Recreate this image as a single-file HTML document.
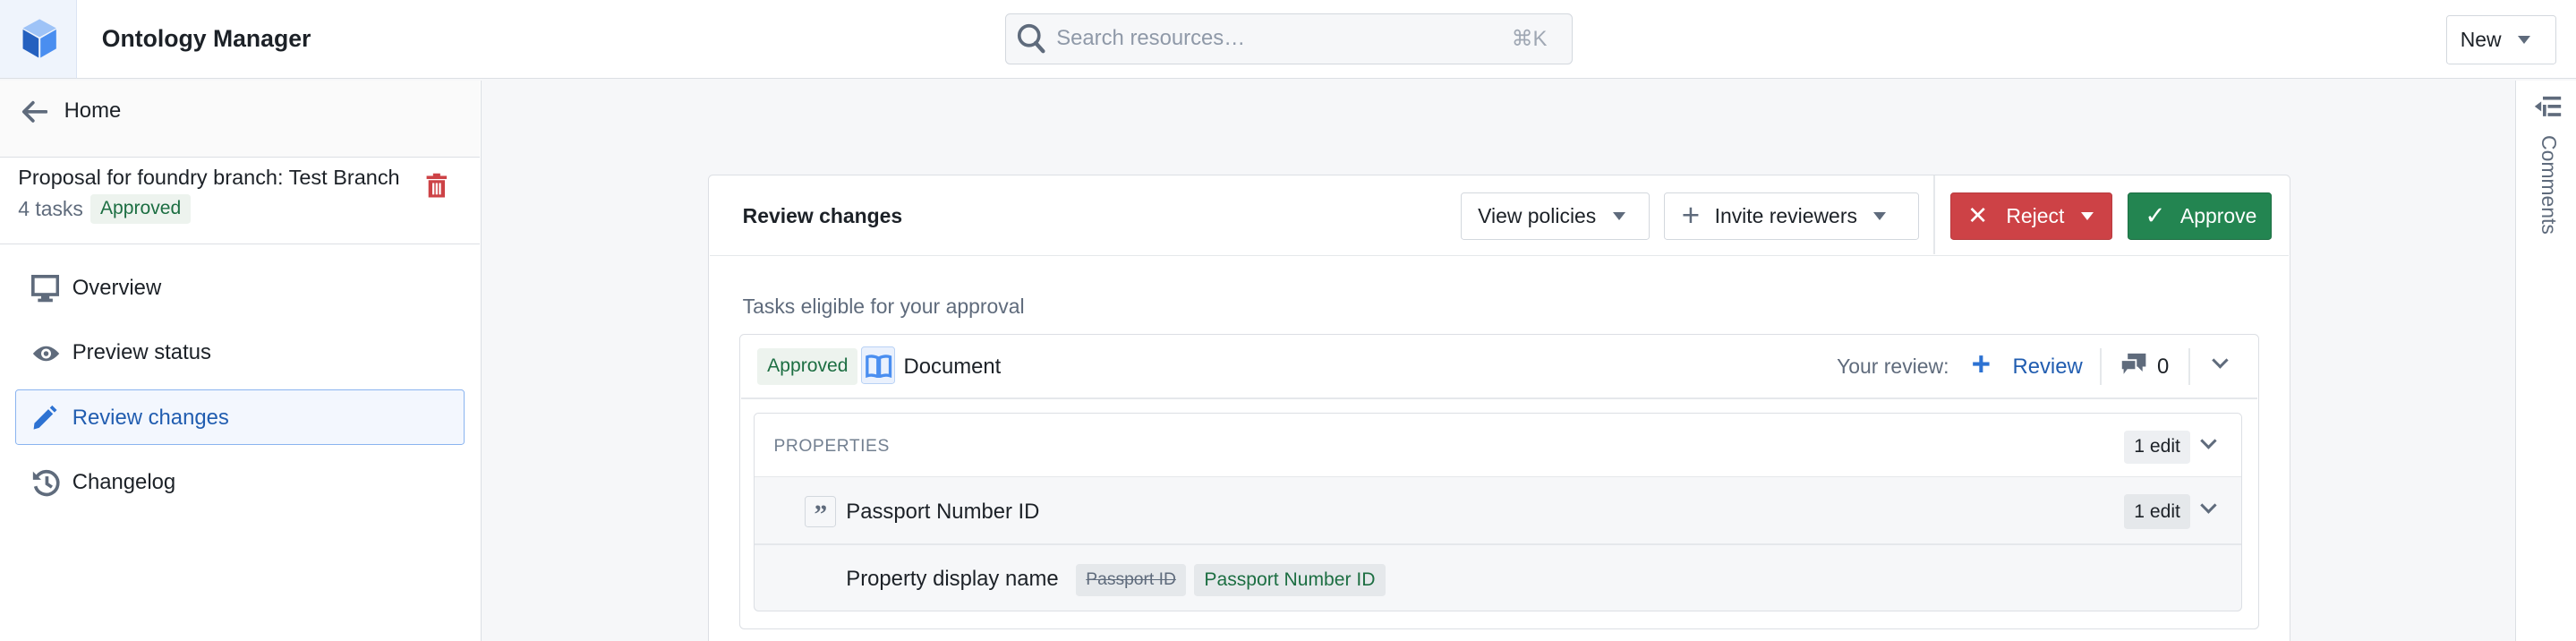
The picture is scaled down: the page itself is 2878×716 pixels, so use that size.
<!DOCTYPE html>
<html><head><meta charset="utf-8"><style>
*{box-sizing:border-box;margin:0;padding:0}
html,body{width:2878px;height:716px;overflow:hidden;background:#f5f6f8}
#r{zoom:1.8355;width:1568px;height:390px;position:relative;font-family:"Liberation Sans",sans-serif;color:#1c2127;font-size:12.5px;overflow:hidden;background:#f6f7f9}
.a{position:absolute}
.t{white-space:nowrap}
.btn{position:absolute;background:#fff;border:1px solid #d3d8de;border-radius:2px;display:flex;align-items:center;font-size:12.5px;padding:0 10px}
.caret{display:inline-block;width:0;height:0;border-left:4px solid transparent;border-right:4px solid transparent;border-top:5px solid #5f6b7c;margin-left:10px}
.tag{position:absolute;border-radius:2px;font-size:11.5px;display:flex;align-items:center;padding:0 6px}
.chev{position:absolute;width:7px;height:7px;border-right:1.8px solid #5f6b7c;border-bottom:1.8px solid #5f6b7c;transform:rotate(45deg)}
.n{font-size:13px}
</style></head><body><div id="r">
<div class="a" style="left:0;top:0;width:1568px;height:48px;background:#fff;border-bottom:1px solid #dcdfe4"></div>
<div class="a" style="left:0;top:0;width:47px;height:48px;background:#eff4fc;border-right:1px solid #dbe4f3;border-bottom:1px solid #dcdfe4"></div>
<svg class="a" style="left:13px;top:11px" width="22" height="25" viewBox="0 0 28 32"><path d="M14 1 L27 8 L14 15 L1 8Z" fill="#9ec3f7"/><path d="M1 9 L13.3 16 L13.3 31 L1 24Z" fill="#2560bf"/><path d="M14.7 16 L27 9 L27 24 L14.7 31Z" fill="#4a8ef0"/></svg>
<div class="a t" style="left:62px;top:15px;font-size:14.5px;font-weight:bold">Ontology Manager</div>
<div class="a" style="left:612px;top:8px;width:345px;height:31px;background:#f6f7f9;border:1px solid #d3d8de;border-radius:3px"></div>
<svg class="a" style="left:619px;top:14px" width="18" height="19" viewBox="0 0 18 19"><circle cx="7.5" cy="7.5" r="6" fill="none" stroke="#5f6b7c" stroke-width="2"/><path d="M11.5 12 L16 17" stroke="#5f6b7c" stroke-width="2.4" stroke-linecap="round"/></svg>
<div class="a t" style="left:643px;top:16px;color:#8f99a8;font-size:13px">Search resources…</div>
<div class="a t" style="left:920px;top:16px;color:#a0a8b4;font-size:13px">⌘K</div>
<div class="btn" style="left:1489px;top:9px;width:67px;height:30px;padding:0 8px">New<span class="caret"></span></div>
<!-- sidebar -->
<div class="a" style="left:0;top:49px;width:293px;height:341px;background:#fff;border-right:1px solid #dcdfe4"></div>
<div class="a" style="left:0;top:49px;width:292px;height:47px;background:#fafafa;border-bottom:1px solid #dcdfe4"></div>
<svg class="a" style="left:13px;top:61px" width="16" height="14" viewBox="0 0 16 14"><path d="M15 7H2 M7 1.5 L1.5 7 L7 12.5" fill="none" stroke="#5f6b7c" stroke-width="2" stroke-linecap="round" stroke-linejoin="round"/></svg>
<div class="a t n" style="left:39px;top:60px">Home</div>
<div class="a t" style="left:11px;top:101px;font-size:12.8px">Proposal for foundry branch: Test Branch</div>
<div class="a t" style="left:11px;top:120px;font-size:12.5px;color:#5f6b7c">4 tasks</div>
<div class="tag" style="left:55px;top:118px;height:18px;background:#edf3ee;color:#1c6e42">Approved</div>
<svg class="a" style="left:259px;top:105px" width="14" height="16" viewBox="0 0 16 18"><rect x="1" y="2" width="14" height="2.2" fill="#cd4246"/><rect x="5.5" y="0.3" width="5" height="2" fill="#cd4246"/><path d="M2.3 5 H13.7 V17 H2.3Z" fill="#cd4246"/><rect x="5" y="7" width="1.4" height="8" fill="#fff"/><rect x="7.3" y="7" width="1.4" height="8" fill="#fff"/><rect x="9.6" y="7" width="1.4" height="8" fill="#fff"/></svg>
<div class="a" style="left:0;top:148px;width:292px;height:1px;background:#dcdfe4"></div>
<svg class="a" style="left:19px;top:167px" width="17" height="17" viewBox="0 0 17 17"><rect x="1" y="1" width="15" height="11" fill="none" stroke="#5f6b7c" stroke-width="2"/><rect x="6" y="12" width="5" height="3" fill="#5f6b7c"/><rect x="4" y="14.5" width="9" height="2" fill="#5f6b7c"/></svg>
<div class="a t n" style="left:44px;top:168px">Overview</div>
<svg class="a" style="left:19px;top:209px" width="18" height="12" viewBox="0 0 18 12"><path d="M1 6 Q9 -3 17 6 Q9 15 1 6Z" fill="#5f6b7c"/><circle cx="9" cy="6" r="3" fill="#fff"/><circle cx="9" cy="6" r="1.5" fill="#5f6b7c"/></svg>
<div class="a t n" style="left:44px;top:207px">Preview status</div>
<div class="a" style="left:9px;top:237px;width:274px;height:34px;background:#f3f7fe;border:1px solid #8ab4f0;border-radius:2px"></div>
<svg class="a" style="left:19px;top:246px" width="16" height="16" viewBox="0 0 17 17"><path d="M2 12 L11 3 L14 6 L5 15 L1.5 16 Z" fill="#2d72d2"/><path d="M12 2 L13.5 0.5 L16.5 3.5 L15 5Z" fill="#2d72d2"/></svg>
<div class="a t n" style="left:44px;top:247px;color:#215db0">Review changes</div>
<svg class="a" style="left:19px;top:285px" width="18" height="18" viewBox="0 0 18 18"><path d="M3.5 5 A7 7 0 1 1 2.5 11" fill="none" stroke="#5f6b7c" stroke-width="2"/><path d="M1 2 V7 H6Z" fill="#5f6b7c"/><path d="M9.5 5 V9.5 L12.5 11.5" fill="none" stroke="#5f6b7c" stroke-width="2"/></svg>
<div class="a t n" style="left:44px;top:286px">Changelog</div>
<!-- right panel -->
<div class="a" style="left:1531px;top:49px;width:37px;height:341px;background:#fff;border-left:1px solid #dcdfe4"></div>
<svg class="a" style="left:1542px;top:58px" width="18" height="14" viewBox="0 0 18 14"><rect x="6" y="1" width="11" height="2" fill="#5f6b7c"/><rect x="9" y="6" width="8" height="2" fill="#5f6b7c"/><rect x="9" y="11" width="8" height="2" fill="#5f6b7c"/><path d="M1 7 L5 4 V10Z" fill="#5f6b7c"/><rect x="6" y="6" width="2" height="7" fill="#5f6b7c"/></svg>
<div class="a t" style="left:1544px;top:82px;writing-mode:vertical-rl;font-size:12.5px;color:#5f6b7c">Comments</div>
<!-- card -->
<div class="a" style="left:431px;top:106px;width:963px;height:300px;background:#fff;border:1px solid #dcdfe4;border-radius:3px"></div>
<div class="a" style="left:432px;top:155px;width:961px;height:1px;background:#e5e8eb"></div>
<div class="a t" style="left:452px;top:124px;font-size:12.5px;font-weight:bold">Review changes</div>
<div class="btn" style="left:889px;top:117px;width:115px;height:29px">View policies<span class="caret"></span></div>
<div class="btn" style="left:1013px;top:117px;width:155px;height:29px"><span style="color:#5f6b7c;font-size:19px;margin-right:9px;line-height:1">+</span>Invite reviewers<span class="caret"></span></div>
<div class="a" style="left:1177px;top:107px;width:1px;height:48px;background:#e5e8eb"></div>
<div class="btn" style="left:1187px;top:117px;width:99px;height:29px;background:#cd4246;border-color:#b83b3f;color:#fff"><span style="font-size:15px;margin-right:11px">✕</span>Reject<span class="caret" style="border-top-color:#fff"></span></div>
<div class="btn" style="left:1295px;top:117px;width:88px;height:29px;background:#238551;border-color:#1c6e42;color:#fff"><span style="font-size:15px;margin-right:9px">✓</span>Approve</div>
<div class="a t" style="left:452px;top:179px;color:#5f6b7c;font-size:12.5px">Tasks eligible for your approval</div>
<!-- task box -->
<div class="a" style="left:450px;top:203px;width:925px;height:180px;border:1px solid #dcdfe4;border-radius:3px;background:#fff"></div>
<div class="a" style="left:451px;top:242px;width:923px;height:1px;background:#e5e8eb"></div>
<div class="tag" style="left:461px;top:212px;height:22px;background:#edf3ee;color:#1c6e42">Approved</div>
<div class="a" style="left:524px;top:211px;width:21px;height:23px;background:#eaf1fd;border:1px solid #b9d2f5;border-radius:2px"></div>
<svg class="a" style="left:527px;top:215px" width="16" height="15" viewBox="0 0 16 15"><path d="M1 2 Q4 1 7.5 2.5 V14 Q4 12.5 1 13.5Z M15 2 Q12 1 8.5 2.5 V14 Q12 12.5 15 13.5Z" fill="none" stroke="#4a8ef0" stroke-width="1.8"/></svg>
<div class="a t n" style="left:550px;top:216px">Document</div>
<div class="a t" style="left:1118px;top:216px;font-size:12.5px;color:#5f6b7c">Your review:</div>
<div class="a t" style="left:1200px;top:212px;font-size:20px;color:#2d72d2;line-height:1;font-weight:bold">+</div>
<div class="a t n" style="left:1225px;top:216px;color:#215db0">Review</div>
<div class="a" style="left:1278px;top:212px;width:1px;height:22px;background:#e5e8eb"></div>
<svg class="a" style="left:1290px;top:214px" width="17" height="16" viewBox="0 0 17 16"><path d="M5 1 H16 V9 H14 V12 L11 9 H5Z" fill="#5f6b7c"/><path d="M1 5 H10 V11 H5 L2 15 V11 H1Z" fill="#5f6b7c" stroke="#fff" stroke-width="1"/></svg>
<div class="a t n" style="left:1313px;top:216px">0</div>
<div class="a" style="left:1332px;top:212px;width:1px;height:22px;background:#e5e8eb"></div>
<div class="chev" style="left:1348px;top:216px"></div>
<!-- inner -->
<div class="a" style="left:459px;top:251px;width:906px;height:121px;border:1px solid #dcdfe4;border-radius:3px;background:#f6f7f9;overflow:hidden">
<div class="a" style="left:0;top:0;width:906px;height:39px;background:#fff;border-bottom:1px solid #e5e8eb"></div>
<div class="a" style="left:0;top:79px;width:906px;height:1px;background:#e5e8eb"></div>
</div>
<div class="a t" style="left:471px;top:266px;font-size:10.5px;color:#738091;letter-spacing:0.3px">PROPERTIES</div>
<div class="tag" style="left:1293px;top:262px;height:20px;background:#edeff2">1 edit</div>
<div class="chev" style="left:1341px;top:265px"></div>
<div class="a" style="left:490px;top:302px;width:19px;height:19px;border:1px solid #d3d8de;border-radius:2px;background:#f6f7f9;color:#5f6b7c;font-size:16px;font-weight:bold;text-align:center;line-height:22px;font-family:'Liberation Serif',serif">”</div>
<div class="a t n" style="left:515px;top:304px">Passport Number ID</div>
<div class="tag" style="left:1293px;top:301px;height:21px;background:#e5e8eb">1 edit</div>
<div class="chev" style="left:1341px;top:304px"></div>
<div class="a t n" style="left:515px;top:345px">Property display name</div>
<div class="tag" style="left:655px;top:343px;height:20px;background:#e5e8eb;color:#5f6b7c;text-decoration:line-through;font-size:10.5px">Passport ID</div>
<div class="tag" style="left:727px;top:343px;height:20px;background:#e5e8eb;color:#1c6e42;font-size:11.5px">Passport Number ID</div>
</div></body></html>
